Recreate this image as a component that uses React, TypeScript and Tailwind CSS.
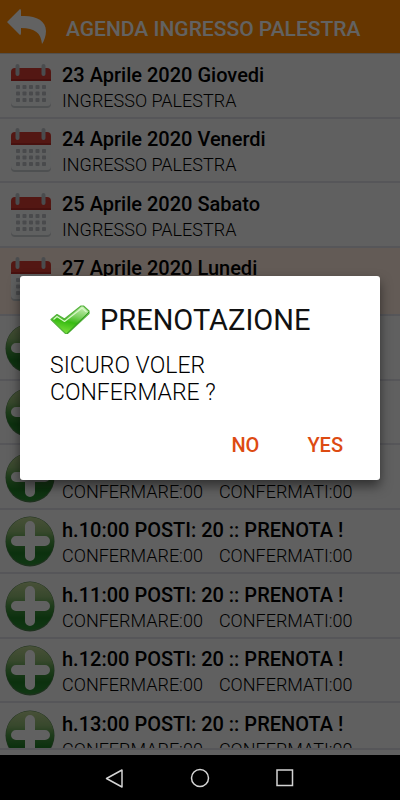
import { useId } from 'react';
import { clsx } from 'clsx';

const days = [
  { title: '23 Aprile 2020 Giovedi', selected: false },
  { title: '24 Aprile 2020 Venerdi', selected: false },
  { title: '25 Aprile 2020 Sabato', selected: false },
  { title: '27 Aprile 2020 Lunedi', selected: true },
];

const slots = ['07:00', '08:00', '09:00', '10:00', '11:00', '12:00', '13:00'];

function BackArrow() {
  return (
    <svg viewBox="0 0 42 38" className="w-[42px] h-[38px]" aria-hidden="true">
      <path
        d="M1 14 L14 1 Q15 1 15 3 V8 C29 7 40 12 40 23 C40 28 38 33 36 36 C35 25 29 20 15 20 V25 Q15 27 14 27 Z"
        fill="#f4f4f4"
      />
    </svg>
  );
}

function CalendarIcon() {
  return (
    <svg viewBox="0 0 40 46" className="w-10 h-[46px] shrink-0" aria-hidden="true">
      <path d="M0 18 H40 V41 a4 4 0 0 1 -4 4 H4 a4 4 0 0 1 -4 -4 Z" fill="#c4c7ca" />
      <path d="M0 18 H40 V39 a4 4 0 0 1 -4 4 H4 a4 4 0 0 1 -4 -4 Z" fill="#eeeff1" />
      <path d="M0 18 V9 a4 4 0 0 1 4 -4 H36 a4 4 0 0 1 4 4 V18 Z" fill="#cf3a30" />
      <rect x="0" y="16" width="40" height="2" fill="#b52c26" />
      <rect x="4.500" y="1" width="4" height="12" rx="2" fill="#b9bec4" />
      <rect x="30.500" y="1" width="4" height="12" rx="2" fill="#b9bec4" />
      {[22, 28.5, 35].map((y) =>
        [5, 11.5, 18, 24.5, 31].map((x) => (
          <rect key={`${x}-${y}`} x={x} y={y} width="4" height="4" rx="0.800" fill="#b6b9be" />
        ))
      )}
    </svg>
  );
}

function PlusIcon() {
  const id = useId();
  return (
    <svg viewBox="0 0 52 52" className="w-[52px] h-[52px] shrink-0" aria-hidden="true">
      <defs>
        <linearGradient id={id} x1="0" y1="0" x2="0" y2="1">
          <stop offset="0" stopColor="#b4c98c" />
          <stop offset="0.3" stopColor="#8db570" />
          <stop offset="0.5" stopColor="#4c9444" />
          <stop offset="0.75" stopColor="#1f7a24" />
          <stop offset="1" stopColor="#2a8a32" />
        </linearGradient>
      </defs>
      <ellipse cx="26" cy="26.500" rx="24.500" ry="25" fill="#4a7a4a" />
      <circle cx="26" cy="26" r="24" fill={`url(#${id})`} />
      <path
        d="M21 11 a5 5 0 0 1 10 0 V21 H41 a5 5 0 0 1 0 10 H31 V41 a5 5 0 0 1 -10 0 V31 H12 a5 5 0 0 1 0 -10 H21 Z"
        fill="#f2f2f2"
      />
    </svg>
  );
}

function CheckIcon() {
  const id = useId();
  return (
    <svg viewBox="0 0 40 30" className="w-10 h-[30px] shrink-0" aria-hidden="true">
      <defs>
        <linearGradient id={id} x1="0.7" y1="0" x2="0.4" y2="1">
          <stop offset="0" stopColor="#c5efb0" />
          <stop offset="0.35" stopColor="#7fd162" />
          <stop offset="0.6" stopColor="#38bb13" />
          <stop offset="1" stopColor="#7be03c" />
        </linearGradient>
      </defs>
      <path
        d="M1 14.500 L7 9.500 L14.500 14 L31 1 H33.500 L39 6 V8.500 L17.500 28.500 H15.500 Z"
        fill={`url(#${id})`}
        stroke="#54b23c"
        strokeWidth="1.200"
        strokeLinejoin="round"
      />
      <path
        d="M3.500 14.500 L7 11.500 L14.500 16.500 L32 3 L36.500 7"
        fill="none"
        stroke="#d8f7c8"
        strokeWidth="1.200"
        strokeLinejoin="round"
      />
      <path d="M39 7 L17 28.500" fill="none" stroke="#2f9a1c" strokeWidth="1" />
    </svg>
  );
}

const rowClass = 'flex items-center border-b-2 border-[#d8d8de] odd:h-[65px] even:h-16 shrink-0';

export default function App() {
  return (
    <div className="flex h-screen flex-col overflow-hidden bg-black font-[Roboto,sans-serif]">
      <div className="relative flex min-h-0 flex-1 flex-col bg-[#f0f0f0]">
        <header className="flex h-[54px] shrink-0 items-center border-b border-[#d0c8c0] bg-[#ff8800] pl-1.5">
          <button type="button" aria-label="Indietro">
            <BackArrow />
          </button>
          <h1 className="ml-[18px] whitespace-nowrap pt-1 text-[21px] font-medium leading-7 text-[#f4f4f4]">
            AGENDA INGRESSO PALESTRA
          </h1>
        </header>

        <ul className="flex min-h-0 flex-1 flex-col overflow-hidden">
          {days.map((day) => (
            <li
              key={day.title}
              className={clsx(
                rowClass,
                'pl-[11px]',
                day.selected && 'even:h-[68px] bg-[#f8e4d6] pb-1'
              )}
            >
              <CalendarIcon />
              <div className="ml-[11px] whitespace-nowrap pt-1 text-black">
                <p className="text-[20px] font-medium leading-[26px]">{day.title}</p>
                <p className="text-[18px] font-light leading-[26px]">INGRESSO PALESTRA</p>
              </div>
            </li>
          ))}
          {slots.map((hour) => (
            <li key={hour} className={clsx(rowClass, 'pl-1')}>
              <PlusIcon />
              <div className="ml-1.5 whitespace-nowrap pt-1 text-black">
                <p className="text-[20px] font-medium leading-[26px]">h.{hour} POSTI: 20 :: PRENOTA !</p>
                <p className="flex gap-4 text-[18px] font-light leading-[26px]">
                  <span>CONFERMARE:00</span>
                  <span>CONFERMATI:00</span>
                </p>
              </div>
            </li>
          ))}
        </ul>
        <div className="h-[7px] shrink-0 border-t-2 border-[#d8d8de]" />

        {/* Confirm dialog */}
        <div className="absolute inset-0 flex items-center bg-black/60 px-5">
          <div
            role="alertdialog"
            aria-labelledby="dialog-title"
            aria-describedby="dialog-text"
            className="w-full rounded-[3px] bg-white pb-2 pt-6 shadow-[0_6px_12px_rgba(0,0,0,0.5)]"
          >
            <div className="flex items-center gap-2.5 pl-[30px]">
              <CheckIcon />
              <h2 id="dialog-title" className="text-[29px] leading-10 text-[#111]">
                PRENOTAZIONE
              </h2>
            </div>
            <p id="dialog-text" className="mt-3 w-[220px] ml-[30px] text-[23px] font-light leading-[27px] text-black">
              SICURO VOLER CONFERMARE ?
            </p>
            <div className="mt-3 flex justify-end gap-5 pr-[23px] text-[20px] font-medium text-[#dd4b12]">
              <button type="button" className="h-[54px] px-3.5">
                NO
              </button>
              <button type="button" className="h-[54px] px-3.5">
                YES
              </button>
            </div>
          </div>
        </div>
      </div>

      {/* System navigation */}
      <nav className="flex h-[45px] shrink-0 items-center justify-center gap-[61px] bg-black">
        <button type="button" aria-label="Back">
          <svg viewBox="0 0 24 24" className="size-6" fill="none" stroke="#d4d4d4" strokeWidth="1.500" strokeLinejoin="round">
            <path d="M19 4 V21 L3.500 12.500 Z" />
          </svg>
        </button>
        <button type="button" aria-label="Home">
          <svg viewBox="0 0 24 24" className="size-6" fill="none" stroke="#d4d4d4" strokeWidth="1.500">
            <circle cx="12" cy="12" r="8.500" />
          </svg>
        </button>
        <button type="button" aria-label="Recents">
          <svg viewBox="0 0 24 24" className="size-6" fill="none" stroke="#d4d4d4" strokeWidth="1.500">
            <rect x="4" y="4" width="15.500" height="15.500" />
          </svg>
        </button>
      </nav>
    </div>
  );
}
